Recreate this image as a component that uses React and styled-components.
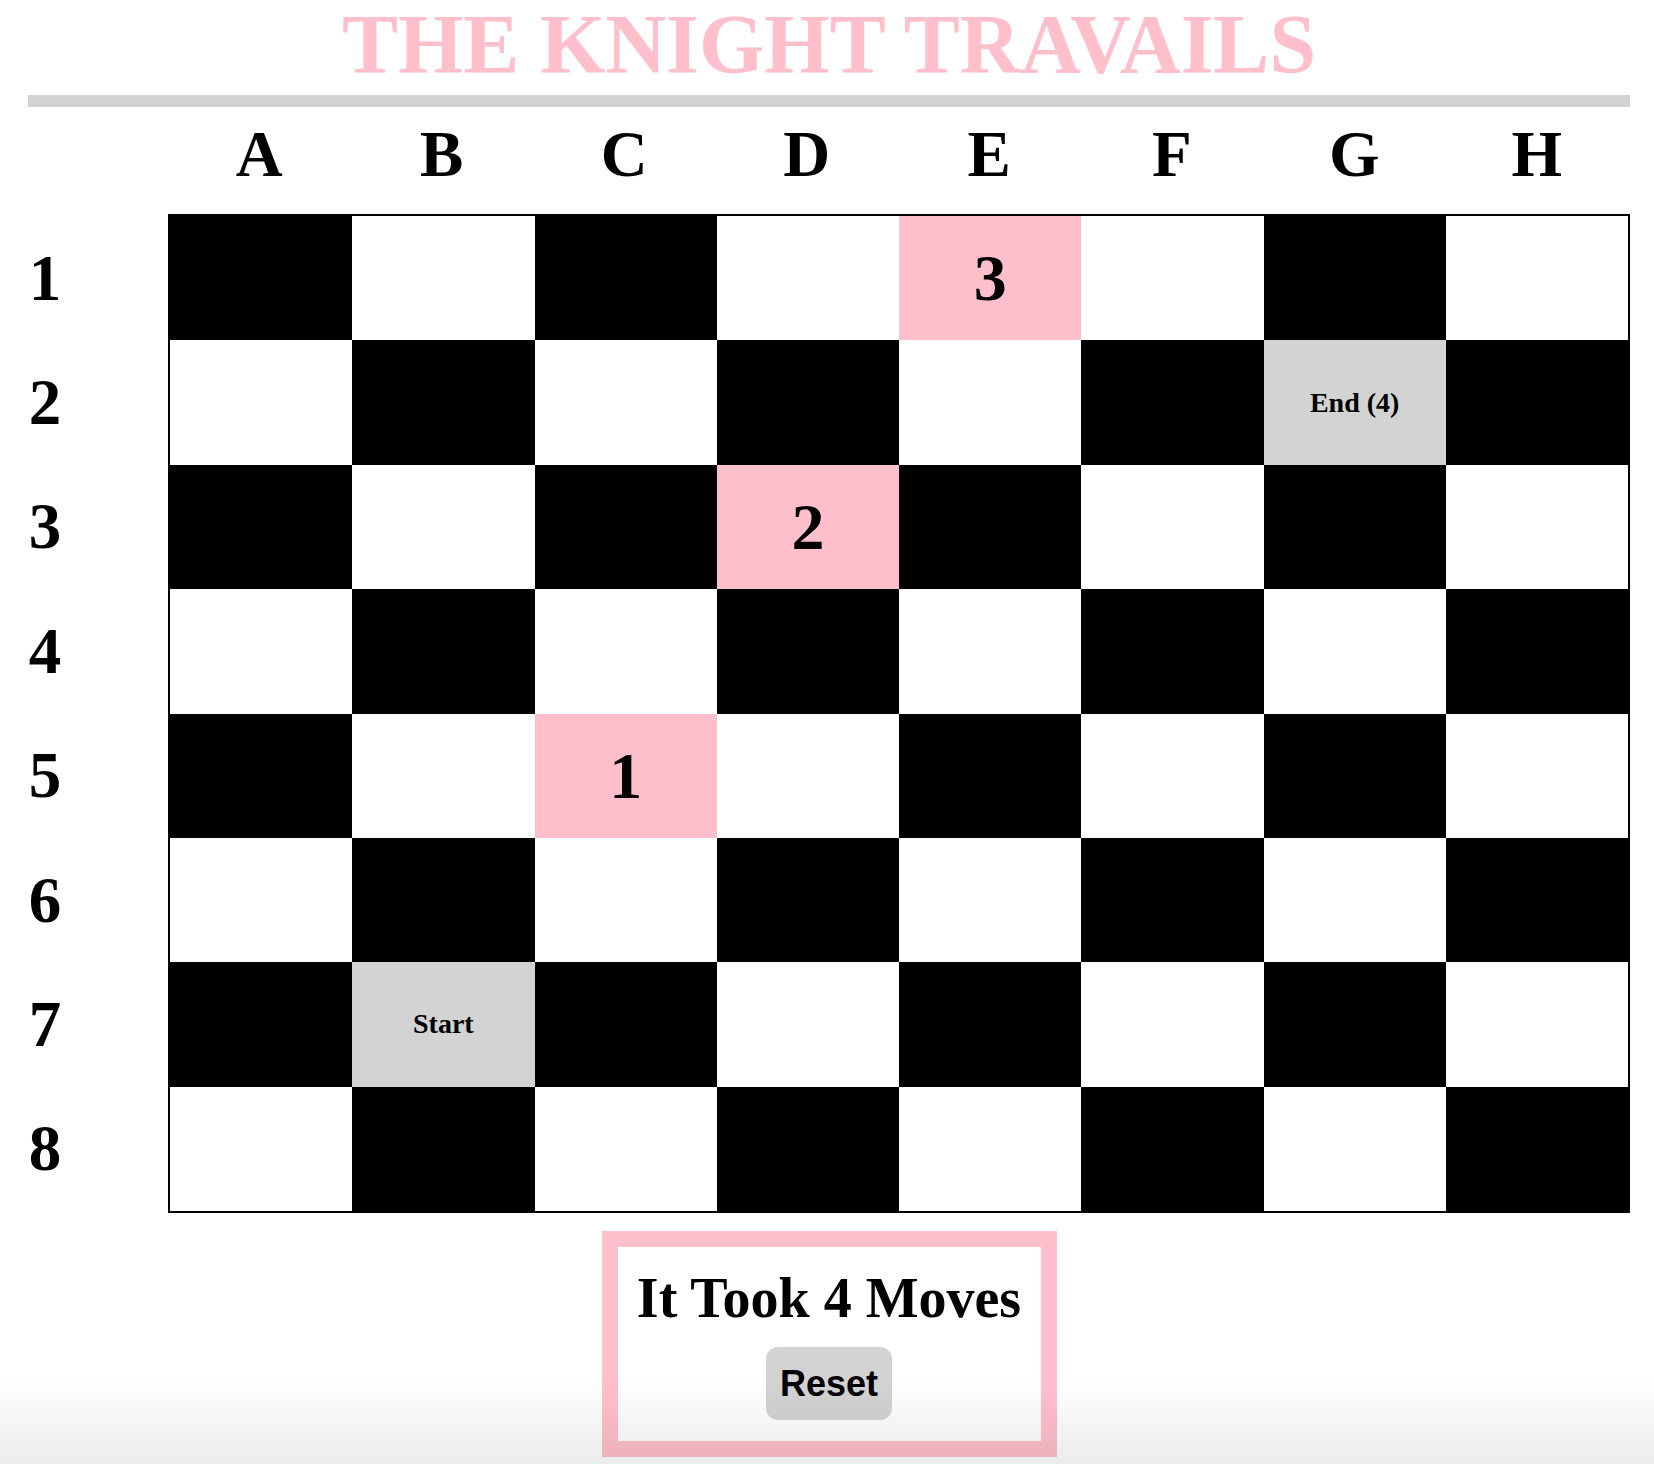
import React from "react";
import styled, { createGlobalStyle } from "styled-components";

const COLS = ["A", "B", "C", "D", "E", "F", "G", "H"];
const ROWS = [1, 2, 3, 4, 5, 6, 7, 8];

// path squares, keyed by "col-row"
const marks = {
  "B-7": { text: "Start", kind: "end" },
  "C-5": { text: "1", kind: "step" },
  "D-3": { text: "2", kind: "step" },
  "E-1": { text: "3", kind: "step" },
  "G-2": { text: "End (4)", kind: "end" },
};

const GlobalStyle = createGlobalStyle`
  html, body {
    margin: 0;
    padding: 0;
    background: #fff;
  }
  body {
    font-family: "Liberation Serif", "Times New Roman", serif;
    color: #000;
  }
  body::after {
    content: "";
    position: fixed;
    left: 0;
    right: 0;
    bottom: 0;
    height: 84px;
    pointer-events: none;
    background: linear-gradient(to bottom, rgba(0, 0, 0, 0), rgba(0, 0, 0, 0.08));
  }
`;

const Page = styled.div`
  padding: 0 24px 0 28px;
`;

const Title = styled.h1`
  margin: 0;
  text-align: center;
  font-size: 84px;
  line-height: 90px;
  font-weight: bold;
  color: pink;
  white-space: nowrap;
`;

const Divider = styled.div`
  margin-top: 5px;
  height: 12px;
  background: lightgray;
`;

const BoardArea = styled.div`
  display: grid;
  grid-template-columns: 34px 1fr;
  grid-template-rows: 107px auto;
  column-gap: 106px;
`;

const ColumnLabels = styled.div`
  grid-column: 2;
  display: grid;
  grid-template-columns: repeat(8, 1fr);
  padding: 0 2px 12px 0;
`;

const RowLabels = styled.div`
  grid-column: 1;
  display: grid;
  grid-template-rows: repeat(8, 1fr);
  padding: 2px 0;
`;

const Label = styled.div`
  display: flex;
  align-items: center;
  justify-content: center;
  font-size: 65px;
  font-weight: bold;
  line-height: 95px;
`;

const Board = styled.div`
  border: 2px solid #000;
  height: 995px;
  display: grid;
  grid-template-columns: repeat(8, 1fr);
  grid-template-rows: repeat(8, 1fr);
`;

const cellColors = {
  dark: "#000",
  light: "#fff",
  step: "pink",
  end: "lightgray",
};

const Cell = styled.div`
  display: flex;
  align-items: center;
  justify-content: center;
  background: ${(p) => cellColors[p.$kind]};
  font-weight: bold;
  font-size: ${(p) => (p.$kind === "step" ? "66px" : "28px")};
  color: #000;
`;

const ResultBox = styled.div`
  box-sizing: border-box;
  width: 455px;
  margin: 18px auto 0;
  border: 16px solid pink;
  padding: 23px 20px 21px;
  display: flex;
  flex-direction: column;
  align-items: center;
`;

const Moves = styled.h2`
  margin: 0;
  font-size: 56px;
  line-height: 56px;
  font-weight: bold;
  white-space: nowrap;
`;

const ResetButton = styled.button`
  margin-top: 21px;
  padding: 16px 14px;
  border: none;
  border-radius: 12px;
  background: lightgray;
  color: #000;
  font-family: "Liberation Sans", Arial, sans-serif;
  font-weight: bold;
  font-size: 36px;
  line-height: 41px;
  cursor: pointer;
`;

export default function App() {
  return (
    <Page>
      <GlobalStyle />
      <Title>THE KNIGHT TRAVAILS</Title>
      <Divider />
      <BoardArea>
        <ColumnLabels>
          {COLS.map((c) => (
            <Label key={c}>{c}</Label>
          ))}
        </ColumnLabels>
        <RowLabels>
          {ROWS.map((r) => (
            <Label key={r}>{r}</Label>
          ))}
        </RowLabels>
        <Board>
          {ROWS.map((r, ri) =>
            COLS.map((c, ci) => {
              const mark = marks[`${c}-${r}`];
              const kind = mark ? mark.kind : (ri + ci) % 2 === 0 ? "dark" : "light";
              return (
                <Cell key={`${c}${r}`} $kind={kind}>
                  {mark ? mark.text : null}
                </Cell>
              );
            })
          )}
        </Board>
      </BoardArea>
      <ResultBox>
        <Moves>It Took 4 Moves</Moves>
        <ResetButton>Reset</ResetButton>
      </ResultBox>
    </Page>
  );
}
